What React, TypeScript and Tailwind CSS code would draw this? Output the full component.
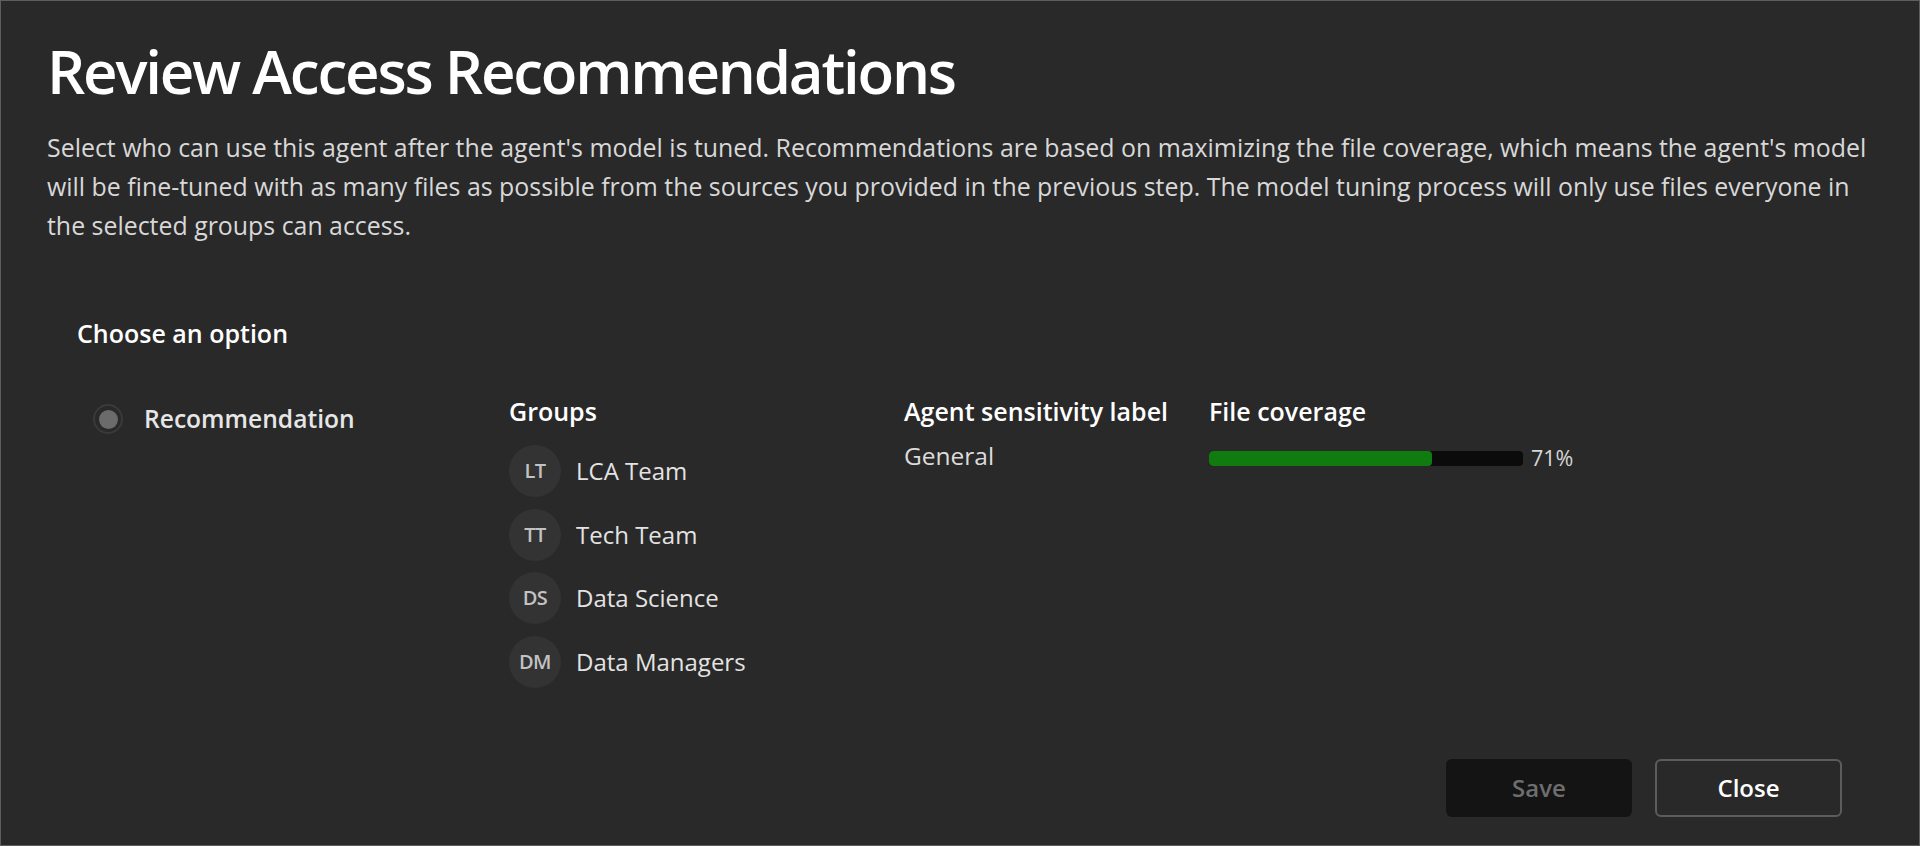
import React from "react";

const groups = [
  { initials: "LT", name: "LCA Team" },
  { initials: "TT", name: "Tech Team" },
  { initials: "DS", name: "Data Science" },
  { initials: "DM", name: "Data Managers" },
];

function GroupRow({ initials, name }: { initials: string; name: string }) {
  return (
    <div className="flex items-center gap-[15px] h-[52px]">
      <div className="w-[52px] h-[52px] rounded-full bg-[#333333] flex items-center justify-center text-[20px] font-semibold text-[#c2c2c2] tracking-[-0.5px]">
        {initials}
      </div>
      <span className="text-[24px] text-[#e3e3e3]">{name}</span>
    </div>
  );
}

export default function App() {
  const coverage = 71;
  return (
    <div
      className="w-full h-[846px] bg-[#292929] border border-[#5e5e5e] flex flex-col px-[46px] pt-[40px] pb-[28px] text-white"
      style={{ fontFamily: '"Open Sans", "Noto Sans", sans-serif' }}
    >
      <h1 className="text-[60px] leading-[60px] font-semibold tracking-[-2.2px] text-white">
        Review Access Recommendations
      </h1>
      <p className="mt-[27px] text-[24.9px] leading-[39px] text-[#d8d8d8]">
        Select who can use this agent after the agent's model is tuned. Recommendations are based on maximizing the file coverage, which means the agent's model
        <br />
        will be fine-tuned with as many files as possible from the sources you provided in the previous step. The model tuning process will only use files everyone in
        <br />
        the selected groups can access.
      </p>

      <div className="ml-[30px] mt-[73px]">
        <h2 className="text-[25px] leading-[30px] font-semibold text-white">Choose an option</h2>

        <div className="flex mt-[48px]">
          {/* option */}
          <div className="w-[432px] flex items-start pt-[8px]">
            <div className="w-[30px] h-[30px] ml-[16px] rounded-full border-[2px] border-[#3a3a3a] flex items-center justify-center">
              <div className="w-[19px] h-[19px] rounded-full bg-[#6b6b6b]" />
            </div>
            <span className="ml-[21px] text-[24.6px] leading-[30px] font-semibold text-[#e6e6e6]">
              Recommendation
            </span>
          </div>

          {/* groups */}
          <div className="w-[395px] flex flex-col">
            <div className="text-[25px] leading-[30px] font-semibold text-white">Groups</div>
            <div className="mt-[19px] flex flex-col gap-[11.5px]">
              {groups.map((g) => (
                <GroupRow key={g.initials} {...g} />
              ))}
            </div>
          </div>

          {/* sensitivity */}
          <div className="w-[305px] flex flex-col">
            <div className="text-[25px] leading-[30px] font-semibold text-white whitespace-nowrap">
              Agent sensitivity label
            </div>
            <div className="mt-[15px] text-[24.5px] leading-[30px] text-[#dcdcdc]">General</div>
          </div>

          {/* coverage */}
          <div className="flex flex-col">
            <div className="text-[25px] leading-[30px] font-semibold text-white">File coverage</div>
            <div className="mt-[17px] h-[30px] flex items-center">
              <div className="w-[314px] h-[15px] rounded-[4px] bg-[#0b0b0b] overflow-hidden">
                <div className="h-full rounded-[4px] bg-[#107c10]" style={{ width: `${coverage}%` }} />
              </div>
              <span className="ml-[8px] text-[21.5px] text-[#d6d6d6]">{coverage}%</span>
            </div>
          </div>
        </div>
      </div>

      <div className="mt-auto flex justify-end gap-[23px] pr-[31px]">
        <button className="w-[186px] h-[58px] rounded-[6px] bg-[#141414] text-[24px] font-semibold text-[#6e6e6e]">
          Save
        </button>
        <button className="w-[187px] h-[58px] rounded-[6px] border-[2px] border-[#5c5c5c] bg-transparent text-[24px] font-semibold text-white">
          Close
        </button>
      </div>
    </div>
  );
}
